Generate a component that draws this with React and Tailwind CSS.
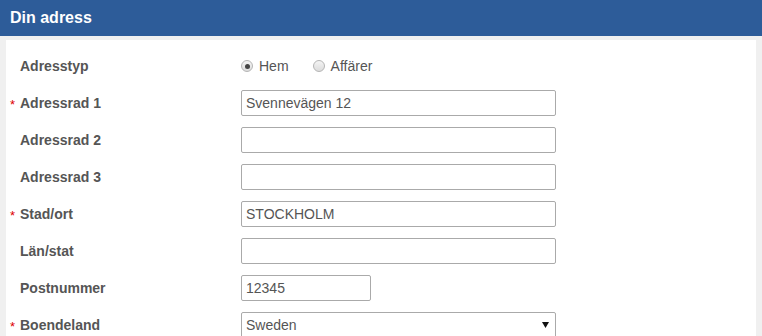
import React from 'react'

const rows = [
  { label: 'Adressrad 1', required: true, value: 'Svennevägen 12' },
  { label: 'Adressrad 2', value: '' },
  { label: 'Adressrad 3', value: '' },
  { label: 'Stad/ort', required: true, value: 'STOCKHOLM' },
  { label: 'Län/stat', value: '' },
  { label: 'Postnummer', value: '12345', short: true },
]

function Label({ text, required }) {
  return (
    <div className="relative flex items-center pl-[8px] text-[14px] font-bold text-[#555]">
      {required && <span className="absolute left-[-2px] top-[5px] text-[13px] font-normal text-[#d00]">*</span>}
      {text}
    </div>
  )
}

function Radio({ checked, label }) {
  return (
    <label className="flex items-center gap-[6px] text-[14px] text-[#555]">
      <span className="flex h-[12px] w-[12px] items-center justify-center rounded-full border border-[#b5b5b5] bg-gradient-to-b from-[#f4f4f4] to-[#dcdcdc]">
        {checked && <span className="h-[5px] w-[5px] rounded-full bg-[#444]" />}
      </span>
      {label}
    </label>
  )
}

export default function App() {
  return (
    <div className="h-[336px] w-[762px] overflow-hidden bg-[#f0f0f0] font-['Liberation_Sans',Arial,sans-serif]">
      <div className="flex h-[36px] items-center bg-[#2d5c99] px-[10px] text-[16px] font-bold text-white">
        Din adress
      </div>
      <div className="ml-[6px] mr-[6px] mt-[4px] bg-white pl-[6px] pt-[13px] pb-4">
        <div className="grid grid-cols-[229px_1fr] gap-y-[11px]">
          <Label text="Adresstyp" />
          <div className="flex h-[26px] items-center gap-[24px] pl-[0px]">
            <Radio checked label="Hem" />
            <Radio label="Affärer" />
          </div>
          {rows.map((r) => (
            <React.Fragment key={r.label}>
              <Label text={r.label} required={r.required} />
              <div
                className={
                  'flex h-[26px] items-center rounded-[2px] border border-[#aaa] px-[4px] text-[14px] text-[#555] ' +
                  (r.short ? 'w-[130px]' : 'w-[315px]')
                }
              >
                {r.value}
              </div>
            </React.Fragment>
          ))}
          <Label text="Boendeland" required />
          <div className="flex h-[26px] w-[315px] items-center justify-between rounded-[2px] border border-[#aaa] pl-[4px] pr-[6px] text-[14px] text-[#555]">
            Sweden
            <svg width="7" height="6" viewBox="0 0 7 6">
              <path d="M0 0H7L3.5 6Z" fill="#111" />
            </svg>
          </div>
        </div>
      </div>
    </div>
  )
}
